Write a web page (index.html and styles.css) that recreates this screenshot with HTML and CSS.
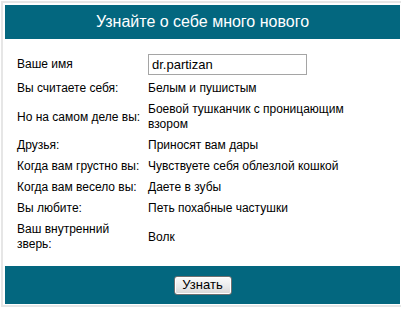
FILE: index.html
```html
<!DOCTYPE html>
<html lang="ru">
<head>
    <meta charset="UTF-8">
    <title>Узнайте о себе много нового</title>
    <link rel="stylesheet" href="styles.css">
</head>
<body>
    <div class="panel">
        <div class="panel-header">Узнайте о себе много нового</div>
        <div class="panel-body">
            <table class="answers">
                <tr>
                    <td class="label">Ваше имя</td>
                    <td class="value"><input type="text" class="name-input" value="dr.partizan"></td>
                </tr>
                <tr>
                    <td class="label">Вы считаете себя:</td>
                    <td class="value">Белым и пушистым</td>
                </tr>
                <tr>
                    <td class="label">Но на самом деле вы:</td>
                    <td class="value">Боевой тушканчик с проницающим взором</td>
                </tr>
                <tr>
                    <td class="label">Друзья:</td>
                    <td class="value">Приносят вам дары</td>
                </tr>
                <tr>
                    <td class="label">Когда вам грустно вы:</td>
                    <td class="value">Чувствуете себя облезлой кошкой</td>
                </tr>
                <tr>
                    <td class="label">Когда вам весело вы:</td>
                    <td class="value">Даете в зубы</td>
                </tr>
                <tr>
                    <td class="label">Вы любите:</td>
                    <td class="value">Петь похабные частушки</td>
                </tr>
                <tr>
                    <td class="label">Ваш внутренний зверь:</td>
                    <td class="value">Волк</td>
                </tr>
            </table>
        </div>
        <div class="panel-footer">
            <button class="submit-btn">Узнать</button>
        </div>
    </div>
</body>
</html>
```

FILE: styles.css
```css
html, body {
    margin: 0;
    overflow: hidden;
    background: #fff;
}
body {
    font-family: "Liberation Sans", Arial, sans-serif;
    font-size: 12px;
    color: #000;
}
.panel {
    width: 395px;
    margin: 1px 0 0 1px;
    padding: 2px 2px 1px 2px;
    border: 2px solid #e6e6e6;
}
.panel-header {
    height: 34px;
    line-height: 33px;
    background-color: #03677f;
    color: #fff;
    font-size: 16px;
    text-align: center;
}
.panel-body {
    padding: 12px 0 11px 8px;
}
.answers {
    border-collapse: collapse;
    border-spacing: 0;
}
.answers td {
    padding: 3px 0 3px 4px;
    line-height: 15px;
    vertical-align: middle;
}
.answers .label {
    width: 127px;
}
.answers .value {
    width: 205px;
}
.name-input {
    display: block;
    box-sizing: border-box;
    width: 159px;
    height: 21px;
    margin: 0;
    padding: 0 3px;
    border: 1px solid #a5a5a5;
    font-family: "Liberation Sans", Arial, sans-serif;
    font-size: 13px;
    color: #000;
}
.panel-footer {
    height: 38px;
    display: flex;
    justify-content: center;
    align-items: center;
    background-color: #03677f;
}
.submit-btn {
    box-sizing: border-box;
    width: 58px;
    height: 19px;
    padding: 0;
    border: 1px solid #6f6f6f;
    border-radius: 3px;
    background: linear-gradient(#fbfbfb, #e9e9e9 60%, #d6d6d6);
    box-shadow: inset 0 0 0 1px #fff;
    font-family: "Liberation Sans", Arial, sans-serif;
    font-size: 13px;
    line-height: 16px;
    color: #000;
}
```
